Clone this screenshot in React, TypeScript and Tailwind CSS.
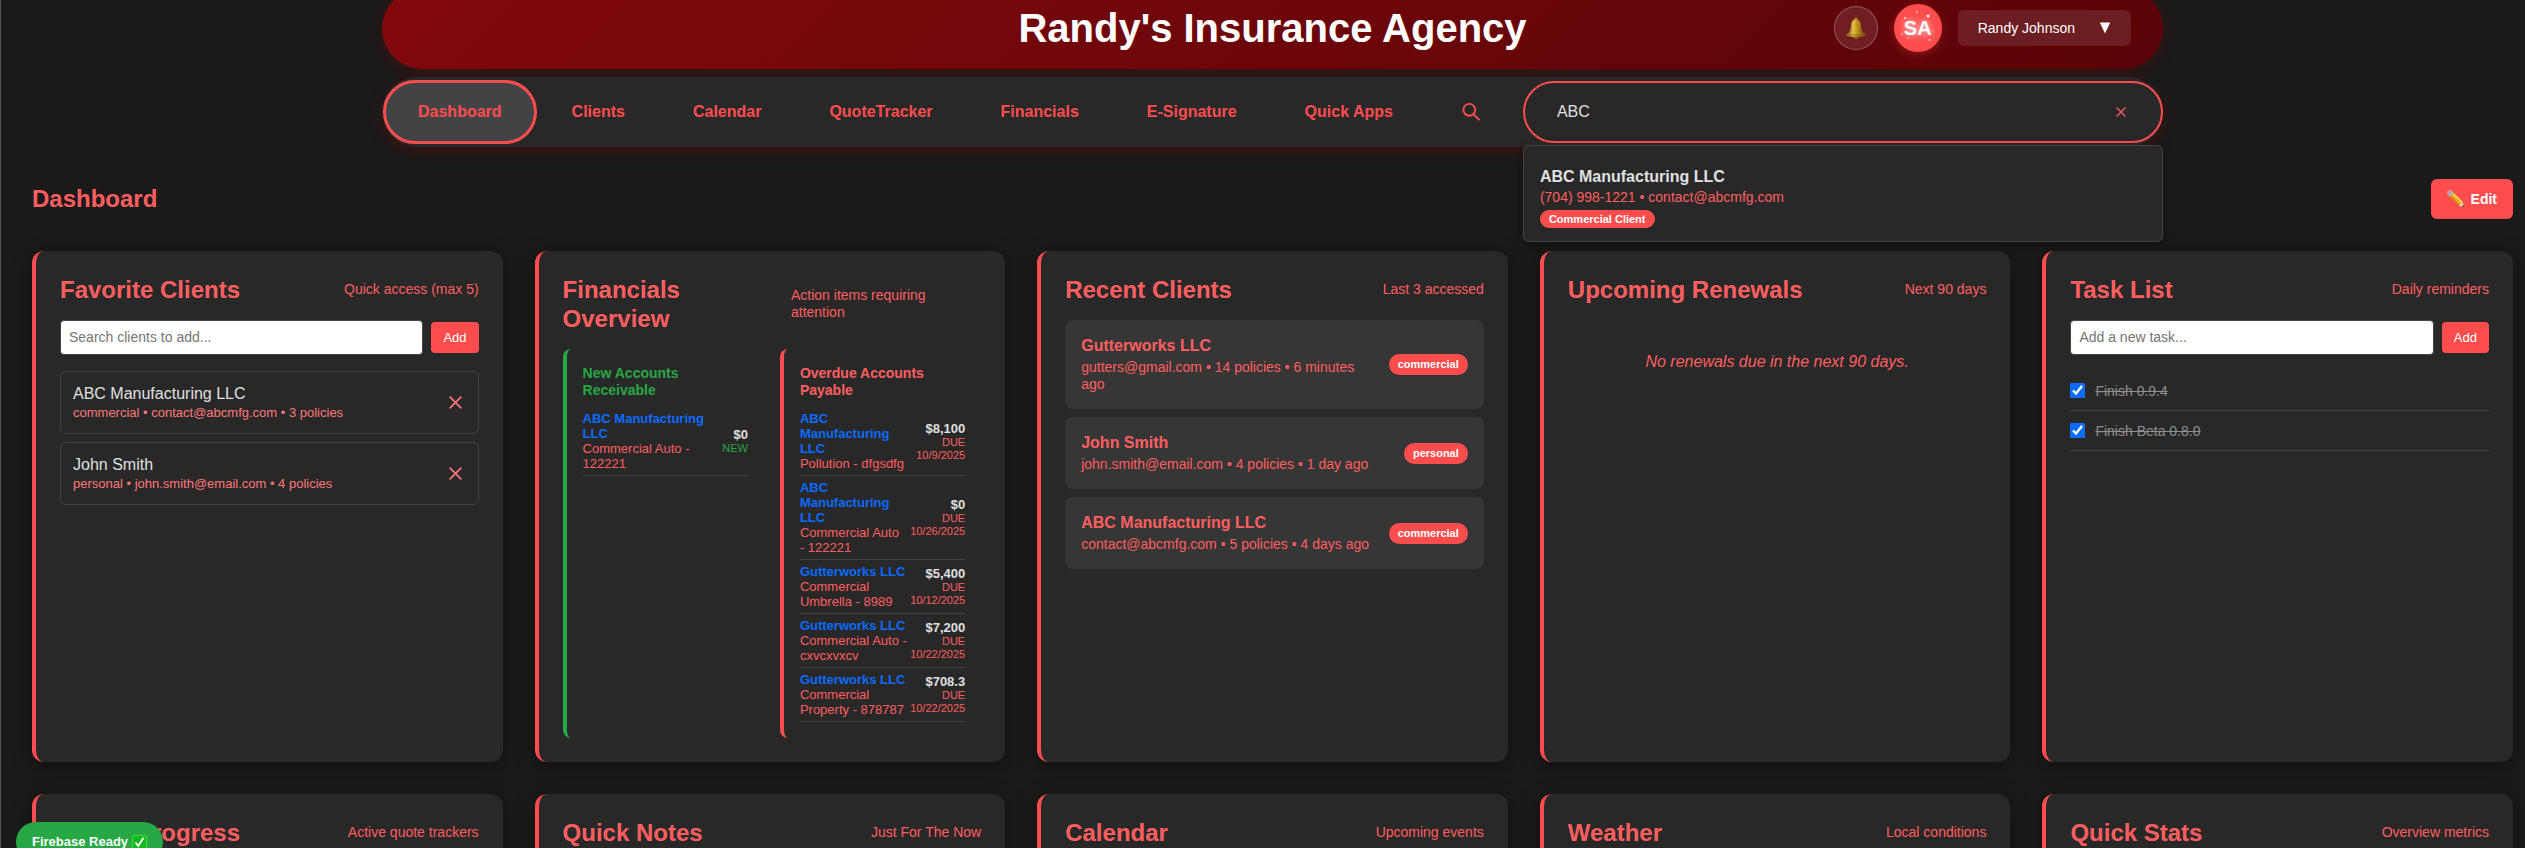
import { useState, type ReactNode } from 'react'

const NAV = ['Clients', 'Calendar', 'QuoteTracker', 'Financials', 'E-Signature', 'Quick Apps']

const FAVORITES = [
  { name: 'ABC Manufacturing LLC', info: 'commercial • contact@abcmfg.com • 3 policies' },
  { name: 'John Smith', info: 'personal • john.smith@email.com • 4 policies' },
]

const PAYABLE = [
  { client: 'ABC Manufacturing LLC', policy: 'Pollution - dfgsdfg', amount: '$8,100', due: 'DUE 10/9/2025' },
  { client: 'ABC Manufacturing LLC', policy: 'Commercial Auto - 122221', amount: '$0', due: 'DUE 10/26/2025' },
  { client: 'Gutterworks LLC', policy: 'Commercial Umbrella - 8989', amount: '$5,400', due: 'DUE 10/12/2025' },
  { client: 'Gutterworks LLC', policy: 'Commercial Auto - cxvcxvxcv', amount: '$7,200', due: 'DUE 10/22/2025' },
  { client: 'Gutterworks LLC', policy: 'Commercial Property - 878787', amount: '$708.3', due: 'DUE 10/22/2025' },
]

const RECENT = [
  { name: 'Gutterworks LLC', info: 'gutters@gmail.com • 14 policies • 6 minutes ago', type: 'commercial' },
  { name: 'John Smith', info: 'john.smith@email.com • 4 policies • 1 day ago', type: 'personal' },
  { name: 'ABC Manufacturing LLC', info: 'contact@abcmfg.com • 5 policies • 4 days ago', type: 'commercial' },
]

function BellIcon() {
  return (
    <svg width="24" height="24" viewBox="0 0 24 24" aria-hidden="true">
      <defs>
        <linearGradient id="bell" x1="0" x2="1" y1="0" y2="0">
          <stop offset="0" stopColor="#7d5a10" />
          <stop offset="0.35" stopColor="#e3c04a" />
          <stop offset="0.6" stopColor="#b98d1c" />
          <stop offset="1" stopColor="#6b4a0c" />
        </linearGradient>
      </defs>
      <circle cx="12" cy="2.8" r="1.5" fill="#a37a1a" />
      <ellipse cx="12" cy="21.4" rx="2.3" ry="1.7" fill="#8a6512" />
      <path d="M12 3.2c-3 0-4.6 2.3-4.9 5.5-.4 4.3-1 6.8-3.3 8.8h16.4c-2.3-2-2.900-4.500-3.300-8.800C16.600 5.500 15 3.200 12 3.200z" fill="url(#bell)" />
      <ellipse cx="12" cy="18.7" rx="10.3" ry="2.1" fill="url(#bell)" />
      <path d="M3.5 18.2c4 1.2 13 1.2 17 0" stroke="#6f5010" strokeWidth="0.7" fill="none" />
    </svg>
  )
}

function PencilIcon() {
  return (
    <svg width="18" height="18" viewBox="2 2 14 14" aria-hidden="true">
      <g transform="rotate(45 9 9)">
        <rect x="0" y="6.8" width="3" height="4.4" rx="1.2" fill="#e88a94" />
        <rect x="2" y="6.8" width="2.2" height="4.4" fill="#9fb4c4" />
        <rect x="4.2" y="6.8" width="9.8" height="1.5" fill="#ffd54a" />
        <rect x="4.2" y="8.3" width="9.8" height="1.5" fill="#f7b924" />
        <rect x="4.2" y="9.8" width="9.8" height="1.4" fill="#d68f13" />
        <path d="M14 6.8l4 2.2-4 2.2z" fill="#f0cf9c" />
        <path d="M16.500 8.200l1.500.8-1.500.8z" fill="#333" />
      </g>
    </svg>
  )
}

function CloseIcon({ size }: { size: number }) {
  return (
    <svg width={size} height={size} viewBox="0 0 12 12" fill="none" stroke="currentColor" strokeWidth="1.5" aria-hidden="true">
      <path d="M0.6 0.6l10.8 10.8M11.4 0.6L0.6 11.4" />
    </svg>
  )
}

function Card({ title, note, children }: { title: string; note: string; children?: ReactNode }) {
  return (
    <section className="rounded-xl border-l-4 border-[#ff4d4d] bg-[#282828] p-6 shadow-[0_4px_20px_rgba(0,0,0,0.4)]">
      <div className="mb-4 flex items-center justify-between">
        <h2 className="text-2xl leading-[29px] font-bold text-[#ff5f5f]">{title}</h2>
        <span className="text-sm leading-[17px] text-[#ff5f5f]">{note}</span>
      </div>
      {children}
    </section>
  )
}

function AddForm({ placeholder }: { placeholder: string }) {
  return (
    <form className="mb-4 flex items-center gap-2" onSubmit={e => e.preventDefault()}>
      <input
        type="text"
        aria-label={placeholder}
        placeholder={placeholder}
        className="min-w-0 flex-1 rounded-sm border border-[#444] bg-white px-2 py-[7px] text-sm leading-[19px] text-black placeholder:text-[#757575]"
      />
      <button type="submit" className="rounded-sm bg-[#ff4d4d] px-3 py-2 text-[13px] leading-[15px] text-white">Add</button>
    </form>
  )
}

function Entry({ client, policy, amount, children }: { client: string; policy: string; amount: string; children: ReactNode }) {
  return (
    <li className="flex items-center justify-between gap-0.5 border-b border-[#444] py-1 text-[13px] leading-[15px]">
      <div>
        <a href="#" className="block font-bold text-[#0a6cff]">{client}</a>
        <div className="text-[#ff5f5f]">{policy}</div>
      </div>
      <div className="text-right">
        <div className="font-bold text-[#e0e0e0]">{amount}</div>
        {children}
      </div>
    </li>
  )
}

function Task({ label }: { label: string }) {
  const [done, setDone] = useState(true)
  return (
    <li className="border-b border-[#444]">
      <label className="flex h-[39px] items-center gap-[10px] text-sm text-[#8f8f8f]">
        <input type="checkbox" checked={done} onChange={() => setDone(!done)} className="size-[15px] accent-[#0a6cff]" />
        <span className={done ? 'line-through' : ''}>{label}</span>
      </label>
    </li>
  )
}

export default function App() {
  const [query, setQuery] = useState('ABC')

  return (
    <div className="h-screen overflow-hidden border-l border-[#555] bg-[#1a1a1a] pr-3 pl-[31px] font-['Liberation_Sans',Arial,sans-serif] text-base">
      <div className="mx-auto max-w-[1781px]">
        <header className="-mt-3 grid grid-cols-[1fr_auto_1fr] items-center rounded-full bg-linear-135 from-[#82090d] to-[#590408] px-8 pt-4 pb-[17px] shadow-[0_4px_15px_rgba(139,0,0,0.3)]">
          <h1 className="col-start-2 text-[40px] leading-none font-bold text-white">Randy's Insurance Agency</h1>
          <div className="flex items-center justify-end gap-4">
            <button type="button" aria-label="Notifications" className="flex size-11 items-center justify-center rounded-full border border-white/25 bg-white/10">
              <BellIcon />
            </button>
            <div className="relative flex size-12 items-center justify-center rounded-full bg-[#ff4d4d] text-xl font-bold text-white shadow-[0_2px_10px_rgba(255,77,77,0.3)]">
              <svg className="absolute inset-0" width="48" height="48" viewBox="0 0 48 48" fill="#fff" aria-hidden="true">
                <circle cx="34" cy="12" r="1.5" opacity="0.9" />
                <circle cx="23" cy="8" r="0.9" opacity="0.7" />
                <circle cx="11" cy="14" r="1.1" opacity="0.8" />
                <circle cx="8" cy="30" r="0.8" opacity="0.8" />
                <circle cx="14" cy="34" r="0.8" opacity="0.6" />
                <circle cx="35.5" cy="36" r="1" opacity="0.7" />
                <circle cx="31" cy="32.5" r="0.7" opacity="0.6" />
                <circle cx="39" cy="28" r="0.7" opacity="0.5" />
              </svg>
              <span className="[text-shadow:0_0_6px_rgba(255,255,255,0.8)]">SA</span>
            </div>
            <button type="button" className="flex h-9 items-center gap-6 rounded-md bg-white/10 px-5 text-sm text-white">
              Randy Johnson
              <svg width="12" height="12" viewBox="0 0 12 12" fill="#fff" aria-hidden="true">
                <path d="M0.8 0.5h10.4l-5.2 11z" />
              </svg>
            </button>
          </div>
        </header>

        <nav className="mt-2 flex h-[70px] items-center rounded-full bg-[#282828] pl-px font-bold text-[#ff4d4d] shadow-[0_4px_15px_rgba(139,0,0,0.3)]">
          <a href="#" className="mr-px rounded-full border-3 border-[#ff4d4d] bg-[#424345] px-8 py-[17px]">Dashboard</a>
          {NAV.map(item => (
            <a key={item} href="#" className="px-[34px] py-5 whitespace-nowrap">{item}</a>
          ))}
          <button type="button" aria-label="Search" className="px-[34px] py-5">
            <svg width="20" height="20" viewBox="0 0 20 20" fill="none" stroke="currentColor" strokeWidth="1.9" aria-hidden="true">
              <circle cx="8.3" cy="7.8" r="5.9" />
              <path d="M12.4 12.2l6 6" />
            </svg>
          </button>
          <div className="relative ml-2 flex-1">
            <input
              type="text"
              aria-label="Search clients"
              value={query}
              onChange={e => setQuery(e.target.value)}
              className="block h-[62px] w-full rounded-full border-2 border-[#ff4d4d] bg-[#282828] px-8 font-normal text-[#e0e0e0] outline-none"
            />
            <button type="button" aria-label="Clear search" onClick={() => setQuery('')} className="absolute inset-y-0 right-[37px] text-[#ff5f5f]">
              <CloseIcon size={10} />
            </button>
            {query && (
              <div className="absolute inset-x-0 top-full z-10 mt-0.5 rounded-md border border-[#444] bg-[#282828] px-4 pt-[21px] pb-[13px] shadow-[0_4px_12px_rgba(0,0,0,0.3)]">
                <div className="leading-5 text-[#e0e0e0]">ABC Manufacturing LLC</div>
                <div className="mt-0.5 text-sm leading-[17px] font-normal text-[#ff5f5f]">(704) 998-1221 • contact@abcmfg.com</div>
                <div className="mt-1 w-fit rounded-full bg-[#ff4d4d] px-[9px] text-[11px] leading-[18px] text-white">Commercial Client</div>
              </div>
            )}
          </div>
        </nav>
      </div>

      <main>
        <div className="my-8 flex items-center justify-between">
          <h2 className="text-2xl font-bold text-[#ff5f5f]">Dashboard</h2>
          <button type="button" className="flex h-10 items-center gap-1.5 rounded-md bg-[#ff4d4d] px-4 text-sm font-bold text-white">
            <PencilIcon />
            Edit
          </button>
        </div>

        <div className="grid grid-cols-5 gap-8">
          <Card title="Favorite Clients" note="Quick access (max 5)">
            <AddForm placeholder="Search clients to add..." />
            <ul className="flex flex-col gap-2">
              {FAVORITES.map(c => (
                <li key={c.name} className="flex items-center justify-between rounded-md border border-[#444] p-3">
                  <div>
                    <div className="leading-5 text-[#e0e0e0]">{c.name}</div>
                    <div className="text-[13px] leading-[17px] text-[#ff7878]">{c.info}</div>
                  </div>
                  <button type="button" aria-label={`Remove ${c.name}`} className="px-1 text-[#ff7878]">
                    <CloseIcon size={13} />
                  </button>
                </li>
              ))}
            </ul>
          </Card>

          <Card title="Financials Overview" note="Action items requiring attention">
            <div className="grid grid-cols-2 gap-4">
              <div className="rounded-lg border-l-4 border-[#28a745] p-4">
                <h3 className="mb-2 text-sm leading-[17px] font-bold text-[#28a745]">New Accounts Receivable</h3>
                <ul>
                  <Entry client="ABC Manufacturing LLC" policy="Commercial Auto - 122221" amount="$0">
                    <div className="text-[11px] leading-[13px] text-[#28a745]">NEW</div>
                  </Entry>
                </ul>
              </div>
              <div className="rounded-lg border-l-4 border-[#ff4d4d] p-4">
                <h3 className="mb-2 text-sm leading-[17px] font-bold text-[#ff5f5f]">Overdue Accounts Payable</h3>
                <ul>
                  {PAYABLE.map(p => (
                    <Entry key={p.policy} client={p.client} policy={p.policy} amount={p.amount}>
                      <div className="text-[11px] leading-[13px] text-[#ff5f5f]">{p.due}</div>
                    </Entry>
                  ))}
                </ul>
              </div>
            </div>
          </Card>

          <Card title="Recent Clients" note="Last 3 accessed">
            <ul className="flex flex-col gap-2">
              {RECENT.map(c => (
                <li key={c.name} className="flex items-center justify-between gap-3 rounded-lg bg-[#363636] p-4">
                  <div className="text-[#ff5f5f]">
                    <div className="mb-1 leading-[19px] font-bold">{c.name}</div>
                    <div className="text-sm leading-[17px]">{c.info}</div>
                  </div>
                  <span className="rounded-full bg-[#ff4d4d] px-[9px] text-[11px] leading-[21px] font-bold text-white">{c.type}</span>
                </li>
              ))}
            </ul>
          </Card>

          <Card title="Upcoming Renewals" note="Next 90 days">
            <p className="py-8 text-center leading-[19px] text-[#ff5f5f] italic">No renewals due in the next 90 days.</p>
          </Card>

          <Card title="Task List" note="Daily reminders">
            <AddForm placeholder="Add a new task..." />
            <ul>
              <Task label="Finish 0.9.4" />
              <Task label="Finish Beta 0.8.0" />
            </ul>
          </Card>

          <Card title="Quote Progress" note="Active quote trackers" />
          <Card title="Quick Notes" note="Just For The Now" />
          <Card title="Calendar" note="Upcoming events" />
          <Card title="Weather" note="Local conditions" />
          <Card title="Quick Stats" note="Overview metrics" />
        </div>
      </main>

      <div className="fixed -bottom-3.5 left-4 flex h-10 items-center gap-1 rounded-full bg-[#28a745] px-4 text-[13px] font-bold text-white">
        Firebase Ready
        <svg width="15" height="14" viewBox="0 0 15 14" aria-hidden="true">
          <rect x="0.5" y="0.5" width="14" height="13" rx="1.5" fill="#12b81c" stroke="#3fdc46" />
          <path d="M3.5 7.5l2.7 3.5 5.3-8.3" fill="none" stroke="#fff" strokeWidth="1.8" />
        </svg>
      </div>
    </div>
  )
}
